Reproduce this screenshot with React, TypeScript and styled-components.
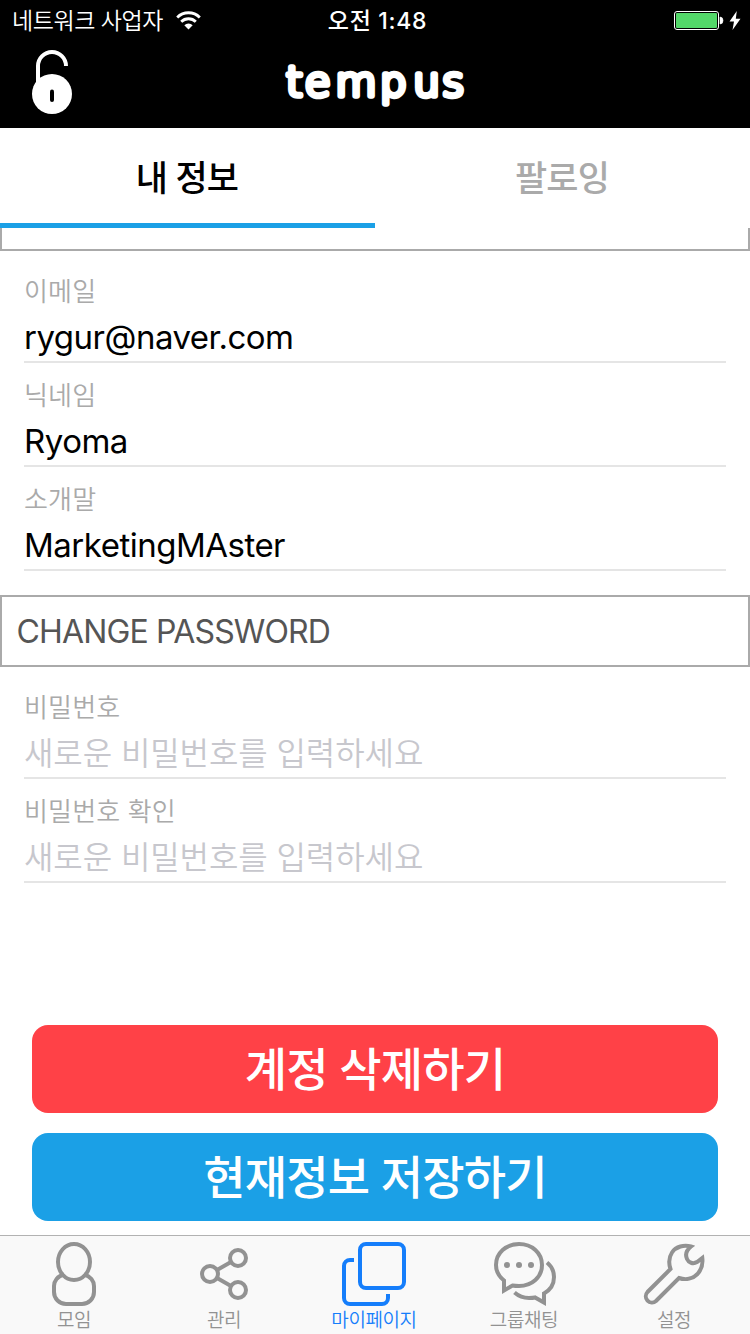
import React from "react";
import styled, { createGlobalStyle } from "styled-components";

const GlobalStyle = createGlobalStyle`
  * { box-sizing: border-box; }
  body {
    margin: 0;
    background: #fff;
    font-family: Inter, "Noto Sans CJK KR", sans-serif;
  }
`;

const Screen = styled.div`
  width: 750px;
  height: 1334px;
  display: flex;
  flex-direction: column;
  overflow: hidden;
  background: #fff;
`;

const StatusBar = styled.div`
  height: 40px;
  flex: none;
  display: grid;
  grid-template-columns: 1fr auto 1fr;
  align-items: center;
  padding: 0 9px 0 12px;
  background: #000;
  color: #fff;
  white-space: nowrap;
`;

const Carrier = styled.div`
  display: flex;
  align-items: center;
  gap: 13px;
  font-size: 23px;
  font-weight: 350;
  line-height: 42px;
  letter-spacing: -0.45px;

  svg {
    margin-bottom: 2px;
  }
`;

const Clock = styled.div`
  padding-left: 2px;
  font-size: 23px;
  font-weight: 500;
  line-height: 42px;
  letter-spacing: 0.7px;
`;

const Power = styled.div`
  display: flex;
  justify-content: flex-end;
  align-items: center;
  gap: 6px;
  padding-bottom: 2px;
`;

const Header = styled.header`
  height: 88px;
  flex: none;
  display: grid;
  grid-template-columns: 1fr auto 1fr;
  align-items: start;
  padding: 9px 32px 0;
  background: #000;
`;

const Tabs = styled.nav`
  height: 100px;
  flex: none;
  display: grid;
  grid-template-columns: 1fr 1fr;
`;

const Tab = styled.div<{ $active?: boolean }>`
  padding: 6px 1px 0 0;
  border-bottom: 5px solid ${(p) => (p.$active ? "#1ba0e6" : "transparent")};
  color: ${(p) => (p.$active ? "#000" : "#aaa")};
  font-size: 35px;
  font-weight: 500;
  line-height: 89px;
  letter-spacing: -0.9px;
  text-align: center;
`;

const Content = styled.main`
  flex: 1;
  min-height: 0;
  display: flex;
  flex-direction: column;
`;

const SectionTitle = styled.h2<{ $clipped?: boolean }>`
  flex: none;
  margin: 0;
  height: ${(p) => (p.$clipped ? 23 : 72)}px;
  padding: 0 14.5px;
  border: 2px solid #aaa;
  border-top-width: ${(p) => (p.$clipped ? 0 : 2)}px;
  color: #555;
  font-size: 32px;
  font-weight: 400;
  line-height: 69px;
  letter-spacing: -0.85px;
`;

const FieldGroup = styled.div`
  padding: 8px 24px 24px;
`;

const Field = styled.div`
  height: 104px;
  border-bottom: 2px solid #e5e5e5;
  white-space: nowrap;
`;

const Label = styled.div`
  height: 52px;
  padding-top: 8px;
  color: #aaa;
  font-size: 26px;
  font-weight: 350;
  line-height: 50px;
  letter-spacing: 0.15px;
`;

const Value = styled.div<{ $placeholder?: boolean }>`
  color: ${(p) => (p.$placeholder ? "#c7c7cd" : "#000")};
  font-size: ${(p) => (p.$placeholder ? 32 : 33)}px;
  font-weight: ${(p) => (p.$placeholder ? 350 : 400)};
  line-height: ${(p) => (p.$placeholder ? 54 : 52)}px;
  letter-spacing: ${(p) => (p.$placeholder ? -0.1 : -0.5)}px;
`;

const Actions = styled.div`
  margin-top: auto;
  padding: 0 32px 14px;
  display: flex;
  flex-direction: column;
  gap: 20px;
`;

const ActionButton = styled.button<{ $color: string }>`
  height: 88px;
  padding: 0;
  border: 0;
  border-radius: 16px;
  background: ${(p) => p.$color};
  color: #fff;
  font-family: inherit;
  font-size: 46px;
  font-weight: 500;
  line-height: 86px;
  letter-spacing: -0.8px;
`;

const TabBar = styled.footer`
  flex: none;
  height: 99px;
  border-top: 1px solid #b2b2b2;
  background: #f9f9f9;
`;

const TabBarRow = styled.div`
  display: grid;
  grid-template-columns: repeat(5, 150px);
  margin-left: -1px;
`;

const TabItem = styled.div<{ $active?: boolean }>`
  display: flex;
  flex-direction: column;
  align-items: center;
  padding-top: 6px;
  color: ${(p) => (p.$active ? "#157efb" : "#929292")};
  font-size: 19px;
  font-weight: 350;
  line-height: 29px;
  letter-spacing: -0.4px;
`;

const IconSvg = styled.svg`
  display: block;
  overflow: visible;
`;

const TabIcon = ({ children }: { children: React.ReactNode }) => (
  <IconSvg width="64" height="64" viewBox="0 0 64 64" fill="none" stroke="currentColor" strokeWidth="4">
    {children}
  </IconSvg>
);

const PersonIcon = () => (
  <TabIcon>
    <ellipse cx="32" cy="20" rx="16" ry="18" />
    <path d="M22 32.500C15.500 34 12 39 12 44V50a12 12 0 0 0 12 12H40a12 12 0 0 0 12-12V44C52 39 48.500 34 42 32.500" />
  </TabIcon>
);

const ShareIcon = () => (
  <TabIcon>
    <circle cx="18" cy="32" r="8" />
    <circle cx="46" cy="16" r="8" />
    <circle cx="46" cy="48" r="8" />
    <path d="M25 28L39 20M25 36L39 44" />
  </TabIcon>
);

const PagesIcon = () => (
  <TabIcon>
    <rect x="18" y="2" width="44" height="44" rx="6" />
    <path d="M12 18H8a6 6 0 0 0-6 6V56a6 6 0 0 0 6 6H40a6 6 0 0 0 6-6V52" />
  </TabIcon>
);

const ChatIcon = () => (
  <TabIcon>
    <path d="M12 48.500V38.500C7 34.500 4 29 4 23C4 11 14 2 27 2C40 2 50 11 50 23C50 35 40 44 27 44C24.500 44 22.500 43.900 20.500 43.500Z" />
    <path d="M55 20.500C60 24.500 62 29.500 62 35C62 42 59 47.500 52 51.500V60.500L43 55.500C41 56 39 56 37 56C31 56 26.500 54 22.500 50.500" />
    <g fill="currentColor" stroke="none">
      <circle cx="15" cy="23" r="3" />
      <circle cx="27" cy="23" r="3" />
      <circle cx="39" cy="23" r="3" />
    </g>
  </TabIcon>
);

const WrenchIcon = () => (
  <TabIcon>
    <path d="M49 4.500C42 2.500 34 4.500 30 10.500C27 15 26.500 21 28.500 27L5.500 50A6.200 6.200 0 0 0 14 59L37 36C44 38.500 51 36.500 55.500 32C60 27 61 22 60.300 16L55 20C51 22.500 46.500 20.500 45 17C43 12.500 44 8.500 49 4.500Z" />
  </TabIcon>
);

const WifiIcon = () => (
  <IconSvg width="25" height="19" viewBox="0 0 25 19" fill="none" stroke="#fff" strokeWidth="2.8">
    <path d="M1.200 6.400A16 16 0 0 1 23.800 6.400" />
    <path d="M5.200 10.800A10.300 10.300 0 0 1 19.800 10.800" />
    <path d="M8.300 14.200A6 6 0 0 1 16.700 14.200L12.500 18.600Z" fill="#fff" stroke="none" />
  </IconSvg>
);

const BatteryIcon = () => (
  <IconSvg width="49" height="19" viewBox="0 0 49 19">
    <rect x="0.500" y="0.500" width="44" height="18" rx="2.500" fill="none" stroke="#fff" />
    <rect x="2" y="2" width="41" height="15" rx="1" fill="#53d769" />
    <path d="M46 6a3 3.500 0 0 1 0 7z" fill="#fff" stroke="#fff" strokeWidth="0.600" />
  </IconSvg>
);

const BoltIcon = () => (
  <IconSvg width="12" height="19" viewBox="0 0 12 19">
    <path d="M7.800 0L0.500 10.500H5L3.500 19L11.500 7.800H6.800Z" fill="#fff" />
  </IconSvg>
);

const UnlockIcon = () => (
  <IconSvg width="40" height="66" viewBox="0 0 40 66">
    <path d="M6 34V17a14 14 0 0 1 28 0" fill="none" stroke="#fff" strokeWidth="4" />
    <circle cx="20" cy="45" r="20" fill="#fff" />
    <rect x="18" y="40.500" width="4" height="12.500" rx="2" fill="#000" />
  </IconSvg>
);

const Wordmark = () => (
  <IconSvg width="182" height="66" viewBox="0 0 182 66">
    <text
      transform="scale(1.05 1)"
      x="1.900 19.700 49 91.400 123.200 150.800"
      y="47"
      fontFamily="'DejaVu Sans', sans-serif"
      fontSize="40"
      fontWeight="200"
      fill="#fff"
      stroke="#fff"
      strokeWidth="5.5"
      strokeLinejoin="round"
    >
      tempus
    </text>
  </IconSvg>
);

const profileFields = [
  { label: "이메일", value: "rygur@naver.com" },
  { label: "닉네임", value: "Ryoma" },
  { label: "소개말", value: "MarketingMAster" },
];

const passwordFields = [
  { label: "비밀번호", hint: "새로운 비밀번호를 입력하세요" },
  { label: "비밀번호 확인", hint: "새로운 비밀번호를 입력하세요" },
];

const tabItems = [
  { label: "모임", Icon: PersonIcon },
  { label: "관리", Icon: ShareIcon },
  { label: "마이페이지", Icon: PagesIcon, active: true },
  { label: "그룹채팅", Icon: ChatIcon },
  { label: "설정", Icon: WrenchIcon },
];

export default function App() {
  return (
    <>
      <GlobalStyle />
      <Screen>
        <StatusBar>
          <Carrier>
            네트워크 사업자
            <WifiIcon />
          </Carrier>
          <Clock>오전 1:48</Clock>
          <Power>
            <BatteryIcon />
            <BoltIcon />
          </Power>
        </StatusBar>
        <Header>
          <UnlockIcon />
          <Wordmark />
        </Header>
        <Tabs>
          <Tab $active>내 정보</Tab>
          <Tab>팔로잉</Tab>
        </Tabs>
        <Content>
          <SectionTitle $clipped />
          <FieldGroup>
            {profileFields.map((f) => (
              <Field key={f.label}>
                <Label>{f.label}</Label>
                <Value>{f.value}</Value>
              </Field>
            ))}
          </FieldGroup>
          <SectionTitle>CHANGE PASSWORD</SectionTitle>
          <FieldGroup>
            {passwordFields.map((f) => (
              <Field key={f.label}>
                <Label>{f.label}</Label>
                <Value $placeholder>{f.hint}</Value>
              </Field>
            ))}
          </FieldGroup>
          <Actions>
            <ActionButton $color="#ff4147">계정 삭제하기</ActionButton>
            <ActionButton $color="#1ba0e6">현재정보 저장하기</ActionButton>
          </Actions>
        </Content>
        <TabBar>
          <TabBarRow>
            {tabItems.map(({ label, Icon, active }) => (
              <TabItem key={label} $active={active}>
                <Icon />
                {label}
              </TabItem>
            ))}
          </TabBarRow>
        </TabBar>
      </Screen>
    </>
  );
}
